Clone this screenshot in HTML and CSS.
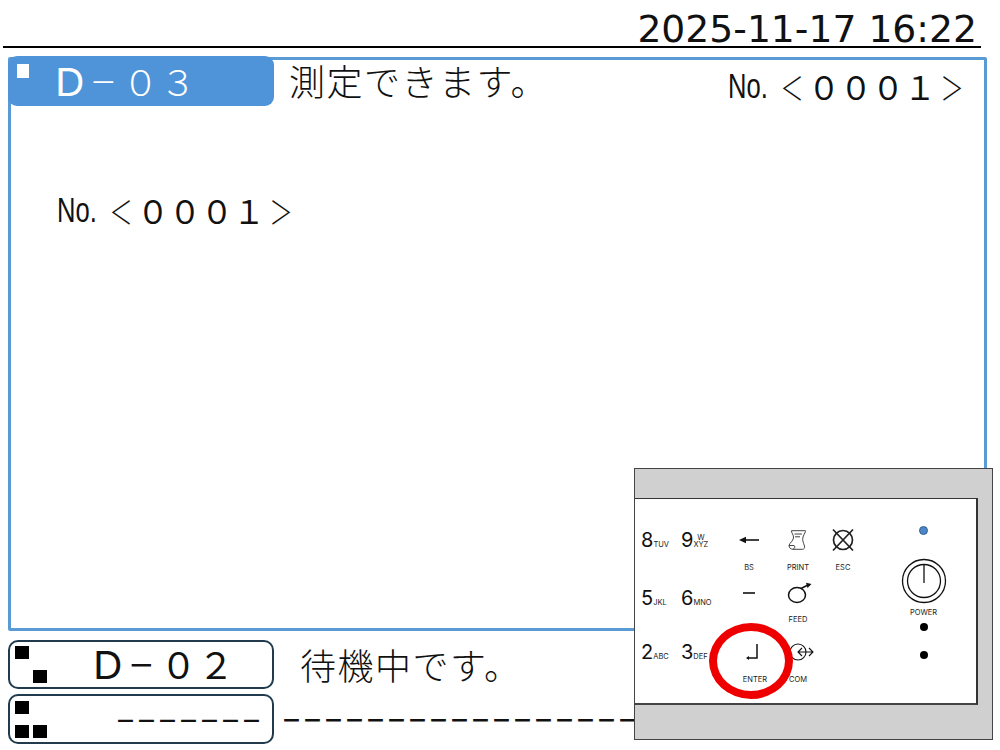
FILE: index.html
```html
<!DOCTYPE html>
<html lang="ja">
<head>
<meta charset="utf-8">
<title>D-03</title>
<link rel="stylesheet" href="styles.css">
</head>
<body>
<div class="screen">
  <header class="topbar"><span class="clock">2025-11-17 16:22</span></header>

  <section class="panel">
    <div class="panel-head">
      <div class="tab tab-active"><span class="sq sq-white"></span><span class="tab-id"><span class="d">D</span><span class="minus">－</span>０３</span></div>
      <div class="msg msg-active">測定できます。</div>
      <div class="no no-right"><span class="no-label">No.</span><span class="no-val"><span class="chev">＜</span>０００１<span class="chev">＞</span></span></div>
    </div>
    <div class="no no-body"><span class="no-label">No.</span><span class="no-val"><span class="chev">＜</span>０００１<span class="chev">＞</span></span></div>
  </section>

  <div class="status-row first">
    <div class="tab tab-line">
      <div class="marks"><span class="sq"></span><span class="sq sq-b"></span></div>
      <span class="tab-id dark"><span class="d">D</span><span class="minus">－</span>０２</span>
    </div>
    <div class="msg msg-wait">待機中です。</div>
  </div>
  <div class="status-row second">
    <div class="tab tab-line">
      <div class="marks marks-3"><span class="sq sq-s"></span><span></span><span class="sq sq-s"></span><span class="sq sq-s"></span></div>
      <span class="dashes short">－－－－－－－</span>
    </div>
    <div class="dashes long">－－－－－－－－－－－－－－－－－</div>
  </div>

  <aside class="keypad">
    <div class="kp-face">
      <div class="kp-keys">
        <div class="kp-row">
          <div class="key"><b>8</b><small>TUV</small></div>
          <div class="key"><b>9</b><small class="stack"><i>W</i><i>XYZ</i></small></div>
          <div class="ico"><svg width="22" height="10" viewBox="0 0 22 10"><path d="M7 5H21" stroke="#111" stroke-width="1.6"/><path d="M1 5L8 1.8V8.2Z" fill="#111"/></svg></div>
          <div class="ico"><svg width="20" height="22" viewBox="0 0 20 22" fill="none" stroke="#444" stroke-width="1"><path d="M3.500 1.700H17.500C18 2.500 16 5 15 8C14 11 15.500 14 16.500 17C17 19 16 20.300 14.500 20.300H5C2.500 20.300 1 18.500 1 16.500C2 13.500 5 12 5.500 9C6 6 3 3.500 3.500 1.700Z"/><path d="M6.500 5H14M7 7.800H12"/><path d="M1 16.500H6C7.500 17 7 19.500 5 20.300"/></svg></div>
          <div class="ico"><svg width="24" height="24" viewBox="0 0 24 24" fill="none" stroke="#222" stroke-width="1.700"><circle cx="12" cy="12" r="9.500"/><path d="M2 1.500L22 22.500M22 1.500L2 22.500"/></svg></div>
          <span class="lbl">BS</span>
          <span class="lbl">PRINT</span>
          <span class="lbl">ESC</span>
        </div>
        <div class="kp-row row-2">
          <div class="key low"><b>5</b><small>JKL</small></div>
          <div class="key low"><b>6</b><small>MNO</small></div>
          <div class="ico"><svg width="14" height="4" viewBox="0 0 14 4"><path d="M1 2H13" stroke="#111" stroke-width="1.600"/></svg></div>
          <div class="ico"><svg class="feed" width="26" height="22" viewBox="0 0 26 22" fill="none" stroke="#111" stroke-width="1.500"><ellipse cx="10" cy="13" rx="8.500" ry="7.500"/><path d="M14 6.500L21 3"/><path d="M19 .8L24.500 2L20.500 6Z" fill="#111" stroke="none"/></svg></div>
          <div></div>
          <span class="lbl"></span>
          <span class="lbl">FEED</span>
          <span class="lbl"></span>
        </div>
        <div class="kp-row row-3">
          <div class="key"><b>2</b><small>ABC</small></div>
          <div class="key"><b>3</b><small>DEF</small></div>
          <div class="ico"><svg class="enter" width="14" height="18" viewBox="0 0 14 18" fill="none"><path d="M12 1V15H3" stroke="#111" stroke-width="1.500"/><path d="M1 15L4 13V17Z" fill="#111"/></svg></div>
          <div class="ico"><svg class="com" width="25" height="18" viewBox="0 0 25 18" fill="none" stroke="#111" stroke-width="1.100"><circle cx="9" cy="9" r="8"/><path d="M9 9H24M13 5L9 9L13 13M20 5L24 9L20 13"/></svg></div>
          <div></div>
          <span class="lbl lbl-enter">ENTER</span>
          <span class="lbl">COM</span>
          <span class="lbl"></span>
        </div>
      </div>
      <div class="kp-power">
        <span class="led"></span>
        <svg class="power" width="46" height="46" viewBox="0 0 46 46" fill="none" stroke="#111"><circle cx="23" cy="23" r="21.500" stroke-width="1.300"/><circle cx="23" cy="23" r="16.500" stroke-width="1.300"/><path d="M23 7V25" stroke-width="1.300"/></svg>
        <span class="lbl">POWER</span>
        <span class="dot"></span>
        <span class="dot dot-2"></span>
      </div>
    </div>
    <div class="ring"></div>
  </aside>
</div>
</body>
</html>
```
FILE: styles.css
```css
* { box-sizing: border-box; }
html, body { margin: 0; padding: 0; background: #fff; }
.screen {
  position: relative;
  width: 1000px;
  height: 750px;
  overflow: hidden;
  font-family: "Noto Sans CJK JP", "Noto Sans", sans-serif;
  color: #111;
}
.topbar {
  height: 48px;
  width: 978px;
  margin-left: 3px;
  border-bottom: 2px solid #000;
  display: flex;
  justify-content: flex-end;
  align-items: flex-end;
}
.clock {
  font-family: "DejaVu Sans", sans-serif;
  font-size: 37.700px;
  line-height: 44px;
  margin: 0 4px -5px 0;
  color: #111;
}
.panel {
  width: 979px;
  height: 574px;
  margin: 9px 0 0 8px;
  border: 3px solid #5b9bd5;
  border-radius: 2px;
}
.panel-head { display: flex; align-items: flex-start; margin: -4px 0 0 -3px; }
.tab {
  width: 266px;
  height: 50px;
  border-radius: 9px;
  display: flex;
  align-items: center;
  flex: none;
}
.tab-active { background: #4f94d8; color: #fff; padding-left: 9px; }
.tab-line { border: 2px solid #1f3b4d; border-radius: 10px; padding-left: 5px; height: 49px; }
.sq { display: block; width: 14px; height: 13px; background: #000; }
.sq-white { width: 12px; height: 14px; background: #fff; margin-top: -20px; }
.tab-id { font-size: 36px; line-height: 50px; letter-spacing: 1.500px; margin-left: 26px; white-space: nowrap; font-weight: 300; }
.d { display: inline-block; width: 30px; font-family: Inter, sans-serif; font-size: 38px; font-weight: 400; transform: scaleX(1.08); transform-origin: left center; }
.minus { display: inline-block; width: 37.500px; transform: scaleX(.74); }
.dark { color: #111; margin-left: 46px; font-weight: 400; }
.marks { display: grid; grid-template-columns: 14px 14px; grid-template-rows: 13px 13px; column-gap: 4px; row-gap: 11px; width: 32px; flex: none; }
.marks .sq-b { grid-column: 2; grid-row: 2; }
.msg { font-size: 36px; letter-spacing: 1.500px; line-height: 50px; font-weight: 300; flex: none; }
.msg-active { margin: -1px 0 0 15px; }
.no { display: flex; align-items: center; font-size: 32px; line-height: 44px; }
.no-right { margin: 8px 0 0 auto; padding-right: 16px; }
.no-body { margin: 80px 0 0 46px; }
.no-label {
  font-family: "Liberation Sans", sans-serif;
  font-size: 35px;
  display: inline-block;
  width: 40px;
  transform: scaleX(.73);
  transform-origin: left center;
}
.no-val { margin-left: 8px; white-space: nowrap; }
.chev { display: inline-block; width: 32px; transform: scaleX(.72); font-weight: 300; }
.status-row { display: flex; align-items: center; margin-left: 8px; }
.first { margin-top: 8px; }
.second { margin-top: 5px; height: 50px; }
.second .tab-line { height: 50px; }
.msg-wait { margin-left: 26px; }
.dashes { font-size: 21px; line-height: 24px; color: #111; white-space: nowrap; font-weight: 700; }
.short { margin-left: 68px; }
.long { margin-left: 7px; font-weight: 900; }

.keypad {
  position: absolute;
  left: 634px;
  top: 468px;
  width: 359px;
  height: 272px;
  background: #d0d0d0;
  border: 1px solid #444;
  padding-top: 29px;
}
.kp-face {
  width: 343px;
  height: 207px;
  background: #fff;
  border-top: 1px solid #333;
  border-bottom: 2px solid #444;
  border-right: 2px solid #333;
  display: flex;
  font-family: Inter, "Liberation Sans", sans-serif;
}
.kp-keys { padding: 21px 0 0 6px; width: 224px; flex: none; }
.kp-row {
  display: grid;
  grid-template-columns: 40px 48px 40px 58px 32px;
  grid-template-rows: 40px 14px;
  align-items: center;
  justify-items: center;
}
.kp-row .lbl:nth-of-type(1) { grid-column: 3; }
.kp-row.row-2 { grid-template-rows: 38px 14px; }
.row-3 { margin-top: 6px; }
.key { justify-self: start; display: flex; align-items: baseline; }
.key.low { margin-top: 10px; }
.key b { font-size: 20px; font-weight: 400; line-height: 24px; }
.key small { font-size: 7.500px; color: #222; white-space: nowrap; }
.key small.stack { display: flex; flex-direction: column; line-height: 7px; align-items: center; align-self: flex-end; margin-bottom: 4px; }
.key small.stack i { font-style: normal; }
.ico { display: flex; align-items: center; justify-content: center; }
.lbl { font-size: 7.500px; line-height: 10px; color: #222; white-space: nowrap; }
.kp-row .lbl { margin-top: 2px; }
.lbl-enter { margin-left: 12px; }
.enter { margin-left: 6px; }
.com { margin-left: 7px; }
.feed { margin-top: -1px; margin-left: 4px; }
.kp-power {
  width: 116px;
  display: flex;
  flex-direction: column;
  align-items: center;
  margin-left: 12px;
}
.led { width: 9px; height: 9px; border-radius: 50%; background: #4a86c8; border: 1px solid #35618f; margin-top: 27px; }
.power { margin-top: 23px; }
.kp-power .lbl { margin-top: 4px; }
.dot { width: 8px; height: 8px; border-radius: 50%; background: #000; margin-top: 5px; }
.dot-2 { margin-top: 20px; }
.ring {
  position: absolute;
  left: 74px;
  top: 154px;
  width: 84px;
  height: 76px;
  border: 8px solid #ee0000;
  border-radius: 50%;
}
```
